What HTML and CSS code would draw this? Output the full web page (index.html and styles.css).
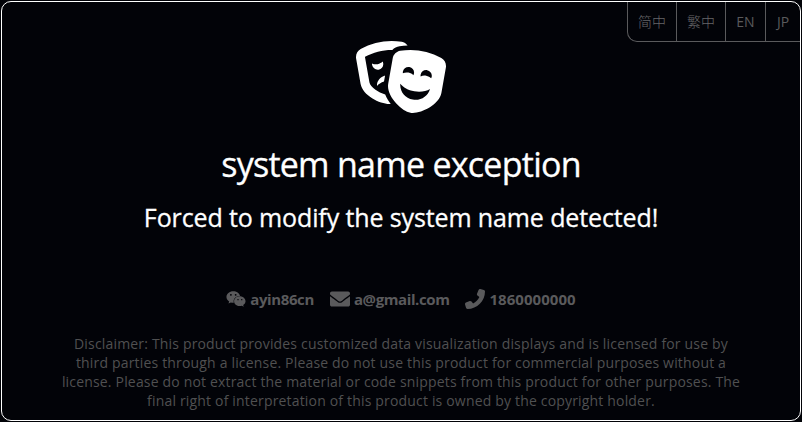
FILE: index.html
```html
<!DOCTYPE html>
<html lang="en">
<head>
<meta charset="utf-8">
<title>System name exception</title>
<link rel="stylesheet" href="styles.css">
</head>
<body>
<main class="panel">
  <nav class="langs">
    <span class="lang zh">简中</span><span class="lang zh">繁中</span><span class="lang en">EN</span><span class="lang jp">JP</span>
  </nav>
  <svg class="masks" viewBox="0 0 640 512" fill="currentColor"><path d="M206.86 245.15c-35.88 10.45-59.95 41.2-57.53 74.1 11.4-12.72 28.81-23.7 49.9-30.92l7.63-43.18zM95.81 295L64.08 115.49c-.29-1.62.28-2.62.24-2.65 57.76-32.06 123.12-49.01 189.01-49.01 1.61 0 3.23.17 4.85.19 13.95-13.47 31.73-22.83 51.59-26 18.89-3.02 38.05-4.55 57.18-5.32-9.99-13.95-24.48-24.23-41.77-27C301.27 1.89 277.24 0 253.32 0 176.66 0 101.02 19.42 33.2 57.06 9.03 70.48-3.92 98.48 1.05 126.58l31.73 179.51c14.23 80.52 136.33 142.08 204.45 142.08 3.59 0 6.75-.46 10.01-.8-13.52-17.08-28.94-40.48-39.5-67.58-47.61-12.98-106.06-51.62-111.93-84.79zm97.55-137.46c-.73-4.12-2.23-7.87-4.07-11.4-8.25 8.91-20.67 15.75-35.32 18.32-14.65 2.58-28.67.4-39.48-5.17-.52 3.94-.64 7.98.09 12.1 3.84 21.7 24.58 36.19 46.34 32.37 21.75-3.82 36.28-24.52 32.44-46.22zM606.8 120.9c-88.98-49.38-191.43-67.41-291.98-51.35-27.31 4.36-49.08 26.26-54.04 54.36l-31.73 179.51c-15.39 87.05 95.28 196.27 158.31 207.35 63.03 11.09 204.47-53.79 219.86-140.84l31.73-179.51c4.97-28.1-7.98-56.11-32.15-69.52zm-273.24 96.8c3.84-21.7 24.58-36.19 46.34-32.36 21.76 3.83 36.28 24.52 32.45 46.22-.73 4.12-2.23 7.87-4.07 11.4-8.25-8.91-20.67-15.75-35.32-18.32-14.65-2.58-28.67-.4-39.48 5.17-.53-3.95-.65-7.99.08-12.11zm70.47 198.76c-55.68-9.79-93.52-59.27-89.04-112.9 20.6 25.54 56.21 46.17 99.49 53.78 43.28 7.61 83.82.37 111.93-16.6-14.18 51.94-66.71 85.51-122.38 75.72zm130.3-151.34c-8.25-8.91-20.68-15.75-35.33-18.32-14.65-2.58-28.67-.4-39.48 5.17-.52-3.94-.64-7.98.09-12.1 3.84-21.7 24.58-36.19 46.34-32.37 21.75 3.83 36.28 24.52 32.45 46.22-.73 4.13-2.23 7.88-4.07 11.4z"/></svg>
  <h1 class="title">system name exception</h1>
  <h2 class="subtitle">Forced to modify the system name detected!</h2>
  <div class="contacts">
    <span class="contact wechat"><svg class="icon" viewBox="0 0 576 512" fill="currentColor"><path d="M385.2 167.6c6.4 0 12.6.3 18.8 1.1C387.4 90.3 303.3 32 207.7 32 100.5 32 13 104.8 13 197.4c0 53.4 29.3 97.5 77.9 131.6l-19.3 58.6 68-34.1c24.4 4.8 43.8 9.7 68.2 9.7 6.2 0 12.1-.3 18.3-.8-4-12.9-6.2-26.6-6.2-40.8-.1-84.9 72.9-154 165.3-154zm-104.5-52.9c14.5 0 24.2 9.7 24.2 24.4 0 14.5-9.7 24.2-24.2 24.2-14.8 0-29.3-9.7-29.3-24.2.1-14.7 14.6-24.4 29.3-24.4zm-136.4 48.6c-14.5 0-29.3-9.7-29.3-24.2 0-14.8 14.8-24.4 29.3-24.4 14.8 0 24.4 9.7 24.4 24.4 0 14.6-9.6 24.2-24.4 24.2zM563 319.4c0-77.9-77.9-141.3-165.4-141.3-92.7 0-165.4 63.4-165.4 141.3S305 460.7 397.6 460.7c19.3 0 38.9-5.1 58.6-9.9l53.4 29.3-14.8-48.6C534 402.1 563 363.2 563 319.4zm-219.1-24.5c-9.7 0-19.3-9.7-19.3-19.6 0-9.7 9.7-19.3 19.3-19.3 14.8 0 24.4 9.7 24.4 19.3 0 10-9.7 19.6-24.4 19.6zm107.1 0c-9.7 0-19.3-9.7-19.3-19.6 0-9.7 9.7-19.3 19.3-19.3 14.5 0 24.4 9.7 24.4 19.3.1 10-9.9 19.6-24.4 19.6z"/></svg>ayin86cn</span>
    <span class="contact mail"><svg class="icon" viewBox="0 0 512 512" fill="currentColor"><path d="M502.3 190.8c3.9-3.1 9.7-.2 9.7 4.7V400c0 26.5-21.5 48-48 48H48c-26.5 0-48-21.5-48-48V195.6c0-5 5.7-7.8 9.7-4.7 22.4 17.4 52.1 39.5 154.1 113.6 21.1 15.4 56.7 47.8 92.2 47.6 35.7.3 72-32.8 92.3-47.6 102-74.1 131.6-96.3 154-113.7zM256 320c23.2.4 56.6-29.2 73.4-41.4 132.7-96.3 142.8-104.7 173.4-128.7 5.8-4.5 9.2-11.5 9.2-18.9v-19c0-26.5-21.5-48-48-48H48c-26.5 0-48 21.5-48 48v19c0 7.4 3.4 14.3 9.2 18.9 30.6 23.9 40.7 32.4 173.4 128.7 16.8 12.2 50.2 41.8 73.4 41.4z"/></svg>a@gmail.com</span>
    <span class="contact phone"><svg class="icon flip" viewBox="0 0 512 512" fill="currentColor"><path d="M164.9 24.6c-7.7-18.6-28-28.5-47.4-23.2l-88 24C12.1 30.2 0 46 0 64C0 311.4 200.6 512 448 512c18 0 33.8-12.1 38.6-29.5l24-88c5.3-19.4-4.6-39.7-23.2-47.4l-96-40c-16.3-6.8-35.2-2.1-46.3 11.6L304.7 368C234.3 334.7 177.3 277.7 144 207.3L193.3 167c13.7-11.2 18.4-30 11.6-46.3l-40-96z"/></svg>1860000000</span>
  </div>
  <p class="disclaimer">Disclaimer: This product provides customized data visualization displays and is licensed for use by<br>third parties through a license. Please do not use this product for commercial purposes without a<br>license. Please do not extract the material or code snippets from this product for other purposes. The<br>final right of interpretation of this product is owned by the copyright holder.</p>
</main>
</body>
</html>
```
FILE: styles.css
```css
* { box-sizing: border-box; }
body {
  margin: 0;
  height: 422px;
  padding: 1px;
  overflow: hidden;
  background: #020308;
  color: #fff;
  font-family: "Open Sans", "Noto Sans CJK SC", sans-serif;
}
.panel {
  position: relative;
  width: 800px;
  height: 420px;
  border: 1px solid #fff;
  border-radius: 10px;
  display: flex;
  flex-direction: column;
  align-items: center;
  overflow: hidden;
}
.langs {
  position: absolute;
  top: 0;
  right: 0;
  display: flex;
  height: 40px;
  border-left: 1px solid #5a5a5c;
  border-bottom: 1px solid #5a5a5c;
  border-bottom-left-radius: 10px;
  color: #5a5a5c;
  font-size: 14px;
  line-height: 39px;
  text-align: center;
}
.lang { border-right: 1px solid #5a5a5c; }
.zh { width: 49px; font-weight: 300; color: #666668; }
.en { width: 40px; }
.jp { width: 34px; border-right: 0; }
.masks {
  flex: none;
  width: 90px;
  height: 72px;
  margin-top: 39px;
}
.title {
  margin: 27px 0 0;
  font-size: 34px;
  line-height: 48px;
  font-weight: 400;
  letter-spacing: -0.74px;
  -webkit-text-stroke: 0.3px #fff;
}
.subtitle {
  margin: 11px 0 0;
  font-size: 25px;
  line-height: 36px;
  font-weight: 400;
  letter-spacing: -0.12px;
  -webkit-text-stroke: 0.3px #fff;
}
.contacts {
  display: flex;
  gap: 16px;
  margin-top: 54px;
  color: #5a5a5c;
  font-size: 15px;
  line-height: 20px;
  font-weight: 700;
}
.contact {
  display: flex;
  align-items: center;
  gap: 4px;
}
.wechat { letter-spacing: -0.38px; }
.mail { letter-spacing: -0.4px; }
.phone { letter-spacing: 0.05px; }
.icon { width: 20px; height: 20px; }
.flip { transform: scaleX(-1); }
.disclaimer {
  margin: 25px 0 0;
  color: #505051;
  font-size: 14px;
  line-height: 19px;
  letter-spacing: 0.175px;
  text-align: center;
  white-space: nowrap;
}
```
